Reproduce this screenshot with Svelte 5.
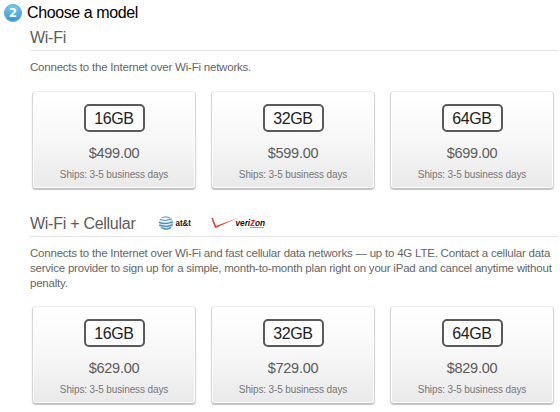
<script lang="ts">
  interface Model {
    size: string;
    price: string;
    ships: string;
  }

  const ships = 'Ships: 3-5 business days';

  const wifi: Model[] = [
    { size: '16GB', price: '$499.00', ships },
    { size: '32GB', price: '$599.00', ships },
    { size: '64GB', price: '$699.00', ships }
  ];

  const cellular: Model[] = [
    { size: '16GB', price: '$629.00', ships },
    { size: '32GB', price: '$729.00', ships },
    { size: '64GB', price: '$829.00', ships }
  ];
</script>

{#snippet cards(models: Model[])}
  <div class="cards">
    {#each models as model}
      <button type="button" class="card">
        <span class="size">{model.size}</span>
        <span class="price">{model.price}</span>
        <span class="ships">{model.ships}</span>
      </button>
    {/each}
  </div>
{/snippet}

<main class="step">
  <header class="step-header">
    <span class="number">2</span>
    <h1>Choose a model</h1>
  </header>

  <section class="group">
    <div class="group-header">
      <h2>Wi-Fi</h2>
    </div>
    <p class="summary">Connects to the Internet over Wi-Fi networks.</p>
    {@render cards(wifi)}
  </section>

  <section class="group cellular">
    <div class="group-header">
      <h2>Wi-Fi + Cellular</h2>
      <svg class="att" width="36" height="16" viewBox="0 0 36 16" aria-label="AT&T">
        <defs>
          <radialGradient id="globe" cx="0.4" cy="0.35" r="0.7">
            <stop offset="0" stop-color="#ffffff" />
            <stop offset="0.6" stop-color="#dceaf3" />
            <stop offset="1" stop-color="#8fb6d2" />
          </radialGradient>
        </defs>
        <circle cx="8" cy="8" r="7.2" fill="url(#globe)" />
        <g fill="none" stroke="#4a8dbd" stroke-linecap="round">
          <path d="M4 2.5Q8 .8 12 2.8" stroke-width=".8" />
          <path d="M2.2 4.7Q7 6.6 13.3 4.2" stroke-width="1" />
          <path d="M1.3 7.4Q7 9.9 14.6 6.8" stroke-width="1.3" />
          <path d="M1.6 10.1Q8 12.6 14.4 9.8" stroke-width="1.2" />
          <path d="M3.4 12.8Q8 15.2 12.5 12.8" stroke-width="1.2" />
        </g>
        <text x="17.5" y="11" textLength="15.5" lengthAdjust="spacingAndGlyphs">at&amp;t</text>
      </svg>
      <svg class="verizon" width="58" height="16" viewBox="0 0 58 16" aria-label="Verizon">
        <defs>
          <linearGradient id="check" x1="0" x2="1">
            <stop offset="0" stop-color="#ee2222" />
            <stop offset="0.5" stop-color="#ee3e38" />
            <stop offset="1" stop-color="#f3958e" />
          </linearGradient>
        </defs>
        <path d="M.4 3H1.8L5 11 29 2 5 12.8H4Z" fill="url(#check)" />
        <text x="24.5" y="11.3" textLength="29.5" lengthAdjust="spacingAndGlyphs">veri<tspan class="zed">z</tspan>on</text>
        <path d="M39 12.6H53" stroke="#ee5b54" stroke-width=".8" />
      </svg>
    </div>
    <p class="summary">
      Connects to the Internet over Wi-Fi and fast cellular data networks — up to 4G LTE. Contact a cellular data<br />
      service provider to sign up for a simple, month-to-month plan right on your iPad and cancel anytime without<br />
      penalty.
    </p>
    {@render cards(cellular)}
  </section>
</main>

<style>
  :global(body) {
    background: #ffffff;
    font-family: "Liberation Sans", Arial, sans-serif;
  }

  .step {
    box-sizing: border-box;
    width: 560px;
    height: 412px;
    overflow: hidden;
    padding-top: 4px;
  }

  .step-header {
    display: flex;
    gap: 5px;
    align-items: center;
    height: 18px;
    padding-left: 4px;
  }

  .number {
    box-sizing: border-box;
    width: 18px;
    height: 18px;
    border: 1px solid #55a8d8;
    border-radius: 50%;
    background: linear-gradient(#7cc6ef, #3399d6);
    color: #ffffff;
    font-family: "DejaVu Sans", sans-serif;
    font-size: 12px;
    font-weight: 700;
    line-height: 16px;
    text-align: center;
  }

  h1,
  h2,
  p {
    margin: 0;
    font-weight: 400;
  }

  h1 {
    color: #000000;
    font-size: 16px;
    letter-spacing: -0.4px;
    line-height: 18px;
  }

  .group {
    padding-left: 30px;
  }

  .group-header {
    display: flex;
    box-sizing: border-box;
    height: 29px;
    border-bottom: 1px solid #e3e3e3;
    margin-right: 2px;
    padding-top: 7px;
  }

  h2 {
    color: #5c5c5c;
    font-size: 16px;
    letter-spacing: -0.27px;
    line-height: 18px;
  }

  .summary {
    padding-top: 9px;
    color: #666666;
    font-size: 11.5px;
    letter-spacing: -0.215px;
    line-height: 15px;
    white-space: nowrap;
  }

  .cards {
    display: flex;
    gap: 15px;
    padding: 16px 0 0 2px;
  }

  .card {
    display: flex;
    box-sizing: border-box;
    flex-direction: column;
    align-items: center;
    width: 164px;
    height: 98px;
    border: 1px solid #d6d6d6;
    border-top-color: #ececec;
    border-bottom-color: #c0c0c0;
    border-radius: 4px;
    background: linear-gradient(#ffffff, #f7f7f7 50%, #e9e9e9);
    box-shadow:
      inset 0 0 0 1px #fdfdfd,
      0 1px 1px #c4c4c4;
    font-family: inherit;
    padding: 12px 0 0;
  }

  .size {
    box-sizing: border-box;
    width: 61px;
    height: 28px;
    border: 2px solid #5a5a5a;
    border-radius: 5px;
    background: #fdfdfd;
    color: #222222;
    font-size: 16px;
    letter-spacing: -0.4px;
    line-height: 26px;
  }

  .price {
    margin-top: 13px;
    color: #5c5c5c;
    font-size: 14.5px;
    letter-spacing: -0.25px;
    line-height: 16px;
  }

  .ships {
    margin-top: 8px;
    color: #777777;
    font-size: 10px;
    letter-spacing: -0.12px;
    line-height: 12px;
  }

  .cellular {
    padding-top: 19px;
  }

  .cellular .cards {
    padding-top: 15px;
  }

  .att {
    margin-left: 23px;
  }

  .verizon {
    margin-left: 17px;
  }

  svg text {
    fill: #111111;
    font-size: 9.5px;
    font-weight: 700;
  }

  .verizon text {
    font-style: italic;
  }

  .verizon .zed {
    fill: #e81c1c;
    font-size: 11px;
  }
</style>
